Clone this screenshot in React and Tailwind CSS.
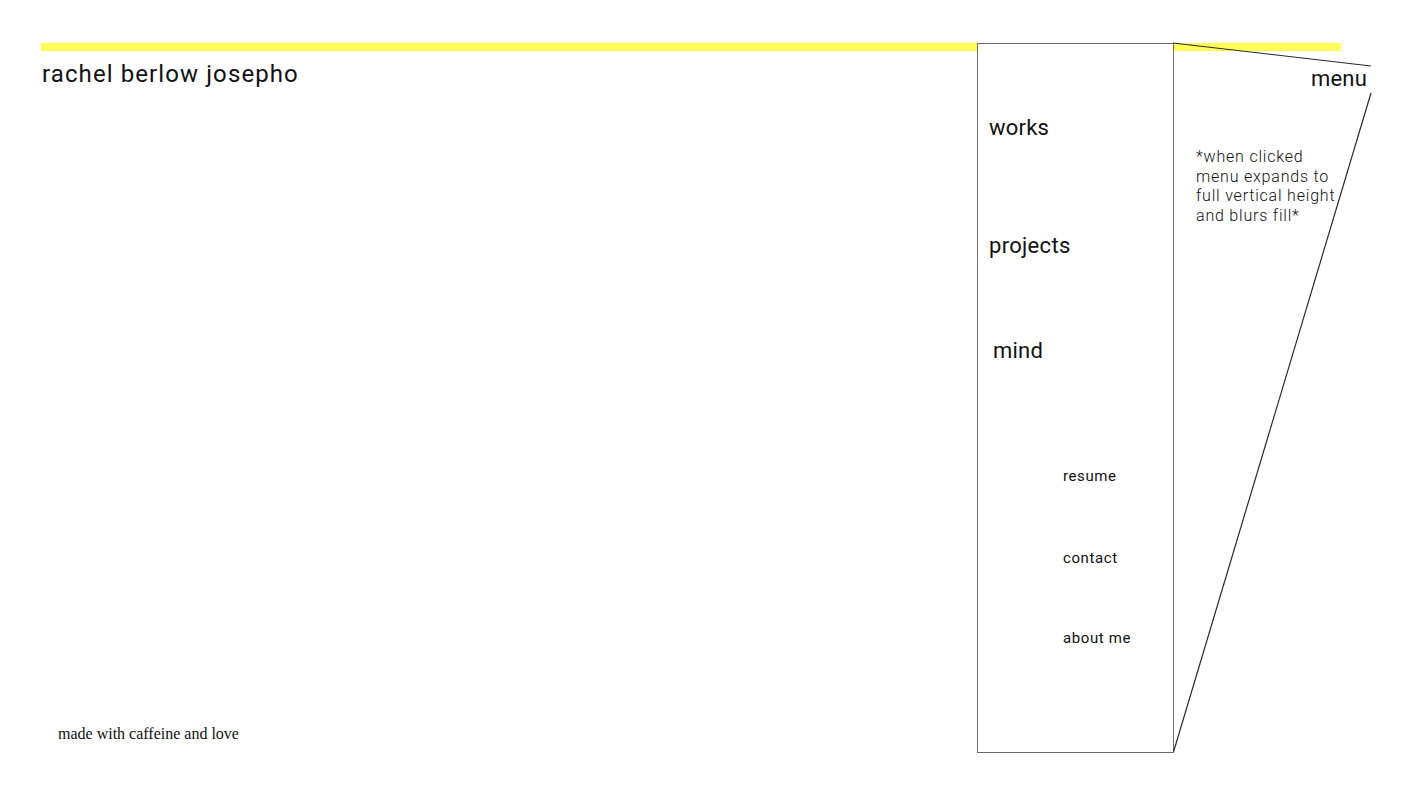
import React from 'react';

const sans = "font-['Roboto','Liberation_Sans',sans-serif]";

export default function App() {
  return (
    <div className="relative w-full h-[792px] bg-white overflow-hidden text-[#111]">
      {/* header */}
      <header className="pt-[43px] px-[41px]">
        <div className="h-[8px] w-[1300px] bg-[#ffff55]"></div>
        <h1 className={`${sans} mt-[9px] ml-[1px] text-[24px] leading-[28px] font-normal tracking-[1.1px]`}>rachel berlow josepho</h1>
      </header>

      <footer className="absolute left-[58px] top-[723px] font-['Liberation_Serif',serif] text-[16px] leading-[22px]">
        made with caffeine and love
      </footer>

      {/* expanded menu panel (wireframe) */}
      <nav className={`${sans} absolute left-[977px] top-[43px] w-[197px] h-[710px] border border-[#6b6b6b] bg-white flex flex-col`}>
        <a className="ml-[11px] mt-[70px] text-[22px] leading-[28px] tracking-[0.2px]">works</a>
        <a className="ml-[11px] mt-[90px] text-[22px] leading-[28px] tracking-[0.3px]">projects</a>
        <a className="ml-[15px] mt-[77px] text-[22px] leading-[28px] tracking-[0.2px]">mind</a>
        <div className="ml-[85px] flex flex-col text-[15px] leading-[20px] tracking-[0.6px]">
          <a className="mt-[101px]">resume</a>
          <a className="mt-[62px]">contact</a>
          <a className="mt-[60px]">about me</a>
        </div>
      </nav>

      <svg className="absolute inset-0 pointer-events-none" width="1414" height="792">
        <line x1="1173" y1="43" x2="1371" y2="66" stroke="#2a2a2a" strokeWidth="1.2" />
        <line x1="1371" y1="93" x2="1173.5" y2="752" stroke="#2a2a2a" strokeWidth="1.2" />
      </svg>

      <div className={`${sans} absolute left-[1311px] top-[65px] text-[22px] leading-[28px] tracking-[0.2px]`}>menu</div>

      <p className={`${sans} absolute left-[1196px] top-[147px] text-[16px] leading-[19.5px] font-light tracking-[0.8px] text-[#111]`}>
        *when clicked<br />menu expands to<br />full vertical height<br />and blurs fill*
      </p>
    </div>
  );
}
